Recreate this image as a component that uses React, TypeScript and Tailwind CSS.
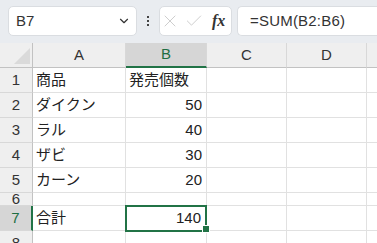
import { ChevronDown, X, Check } from 'lucide-react';

const font = { fontFamily: '"Liberation Sans", "Noto Sans CJK JP", sans-serif' };

const rows: { n: string; a: string; b: string; h: string }[] = [
  { n: '1', a: '商品', b: '発売個数', h: 'h-[25px]' },
  { n: '2', a: 'ダイクン', b: '50', h: 'h-[25px]' },
  { n: '3', a: 'ラル', b: '40', h: 'h-[25px]' },
  { n: '4', a: 'ザビ', b: '30', h: 'h-[25px]' },
  { n: '5', a: 'カーン', b: '20', h: 'h-[25px]' },
  { n: '6', a: '', b: '', h: 'h-[13px]' },
  { n: '7', a: '合計', b: '140', h: 'h-[25px]' },
  { n: '8', a: '', b: '', h: 'h-[25px]' },
];

function Cell({ children, right, className = '' }: { children?: React.ReactNode; right?: boolean; className?: string }) {
  return (
    <div className={`border-r border-b border-[#e1e1e1] flex items-center overflow-hidden whitespace-nowrap ${right ? 'justify-end pr-[4px]' : 'pl-[3px]'} ${className}`}>
      {children}
    </div>
  );
}

export default function App() {
  return (
    <div className="w-[377px] h-[243px] overflow-hidden bg-white text-[#222] text-[15px]" style={font}>
      {/* formula bar */}
      <div className="h-[43px] bg-[#e9ecf0] flex items-start pt-[6px] pl-[8px]">
        <div className="w-[129px] h-[30px] bg-white rounded-[5px] border border-[#dadde1] flex items-center justify-between pl-[7px] pr-[5px]">
          <span className="text-[15px] text-[#333]">B7</span>
          <ChevronDown size={14} strokeWidth={2} className="text-[#333]" />
        </div>
        <div className="w-[22px] h-[30px] flex flex-col items-center justify-center gap-[2px]">
          <span className="w-[2px] h-[2px] bg-[#444]" />
          <span className="w-[2px] h-[2px] bg-[#444]" />
          <span className="w-[2px] h-[2px] bg-[#444]" />
        </div>
        <div className="w-[73px] h-[30px] bg-white rounded-[5px] border border-[#dadde1] flex items-center">
          <X size={20} strokeWidth={1} className="text-[#c4c4c4]" />
          <Check size={20} strokeWidth={1} className="text-[#c4c4c4] ml-[4px]" />
          <span className="ml-[8px] italic text-[16px] text-[#333] font-bold" style={{ fontFamily: '"Liberation Serif", serif' }}>fx</span>
        </div>
        <div className="ml-[5px] flex-1 h-[30px] bg-white rounded-l-[5px] border border-r-0 border-[#dadde1] flex items-center pl-[12px]">
          <span className="text-[15px] text-[#333] tracking-[0.2px]">=SUM(B2:B6)</span>
        </div>
      </div>

      {/* grid */}
      <div className="grid grid-cols-[33px_93px_81px_80px_80px_10px] bg-white">
        <div className="h-[25px] bg-[#efefef] border-r border-b border-[#c2c2c2] relative">
          <svg className="absolute left-[14px] top-[5px]" width="16" height="16" viewBox="0 0 16 16">
            <polygon points="16,0 16,16 0,16" fill="#dadada" />
          </svg>
        </div>
        <div className="h-[25px] bg-[#efefef] border-r border-b border-[#c2c2c2] border-r-[#d8d8d8] flex items-center justify-center text-[#333]">A</div>
        <div className="h-[25px] bg-[#d6d6d6] border-r border-b-2 border-r-[#d8d8d8] border-b-[#217346] flex items-center justify-center text-[#1e6e43]">B</div>
        <div className="h-[25px] bg-[#efefef] border-r border-b border-[#c2c2c2] border-r-[#d8d8d8] flex items-center justify-center text-[#333]">C</div>
        <div className="h-[25px] bg-[#efefef] border-r border-b border-[#c2c2c2] border-r-[#d8d8d8] flex items-center justify-center text-[#333]">D</div>
        <div className="h-[25px] bg-[#efefef] border-b border-[#c2c2c2]" />

        {rows.map((r) => {
          const sel = r.n === '7';
          return (
            <div key={r.n} className="contents">
              <div
                className={`${r.h} border-b border-b-[#d8d8d8] flex items-center justify-center overflow-hidden ${
                  sel ? 'bg-[#d6d6d6] border-r-2 border-r-[#217346] text-[#1e6e43]' : 'bg-[#efefef] border-r border-r-[#c2c2c2] text-[#333]'
                }`}
              >
                {r.n}
              </div>
              <Cell className={r.h}>{r.a}</Cell>
              {sel ? (
                <div className={`${r.h} relative border-r border-b border-[#e1e1e1]`}>
                  <div className="absolute -left-[1px] -top-[1px] w-[82px] h-[27px] border-2 border-[#217346] flex items-center justify-end pr-[4px]">
                    {r.b}
                  </div>
                  <div className="absolute -right-[4px] -bottom-[3px] w-[6px] h-[6px] bg-[#217346] border border-white box-content" />
                </div>
              ) : (
                <Cell right={r.n !== '1'} className={r.h}>{r.b}</Cell>
              )}
              <Cell className={r.h} />
              <Cell className={r.h} />
              <div className={`${r.h} border-b border-[#e1e1e1]`} />
            </div>
          );
        })}
      </div>
    </div>
  );
}
